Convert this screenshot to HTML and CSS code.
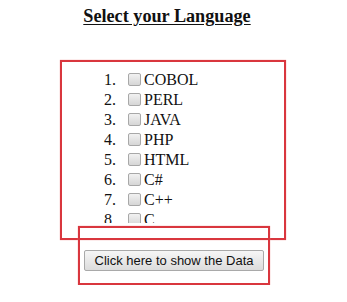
FILE: index.html
```html
<!DOCTYPE html>
<html lang="en">
<head>
    <meta charset="UTF-8">
    <title>Select your Language</title>
    <link rel="stylesheet" href="styles.css">
</head>
<body>
    <h3 class="title">Select your Language</h3>

    <div class="lang-box">
        <ol class="lang-list">
            <li><input type="checkbox" class="check">COBOL</li>
            <li><input type="checkbox" class="check">PERL</li>
            <li><input type="checkbox" class="check">JAVA</li>
            <li><input type="checkbox" class="check">PHP</li>
            <li><input type="checkbox" class="check">HTML</li>
            <li><input type="checkbox" class="check">C#</li>
            <li><input type="checkbox" class="check">C++</li>
            <li><input type="checkbox" class="check">C</li>
        </ol>
    </div>

    <div class="button-box">
        <button class="show-button">Click here to show the Data</button>
    </div>
</body>
</html>
```

FILE: styles.css
```css
body {
    margin: 0;
    padding: 0;
    font-family: 'Liberation Serif', 'Times New Roman', serif;
    font-size: 16px;
    color: #111;
    background: #fff;
}
.title {
    margin: 0;
    padding-top: 6px;
    padding-right: 13px;
    height: 60px;
    box-sizing: border-box;
    text-align: center;
    font-size: 18.2px;
    font-weight: bold;
    text-decoration: underline;
    text-underline-offset: 2px;
}
.lang-box {
    margin-left: 60px;
    width: 226px;
    height: 180px;
    box-sizing: border-box;
    border: 2px solid #d9363e;
    box-shadow: 0 0 1px #e88;
    padding-top: 8px;
}
.lang-list {
    margin: 0;
    padding-left: 58px;
    height: 153px;
    overflow: hidden;
    line-height: 20px;
}
.lang-list li {
    height: 20px;
    padding-left: 1px;
}
.check {
    -webkit-appearance: none;
    appearance: none;
    width: 13px;
    height: 13px;
    margin: 0 3px 0 7px;
    vertical-align: -1px;
    border: 1px solid #a8a8a8;
    border-radius: 2px;
    background: linear-gradient(#f2f2f2, #d6d6d6);
    box-sizing: border-box;
}
.button-box {
    position: relative;
    margin-top: -14px;
    margin-left: 78px;
    width: 192px;
    height: 59px;
    box-sizing: border-box;
    border: 2px solid #d9363e;
    box-shadow: 0 0 1px #e88;
    padding-top: 22px;
    text-align: center;
}
.show-button {
    width: 180px;
    height: 21px;
    padding: 0;
    font-family: 'Liberation Sans', Arial, sans-serif;
    font-size: 13px;
    color: #111;
    border: 1px solid #a9a9a9;
    border-radius: 2px;
    background: linear-gradient(#f6f6f6, #dcdcdc);
}
```
